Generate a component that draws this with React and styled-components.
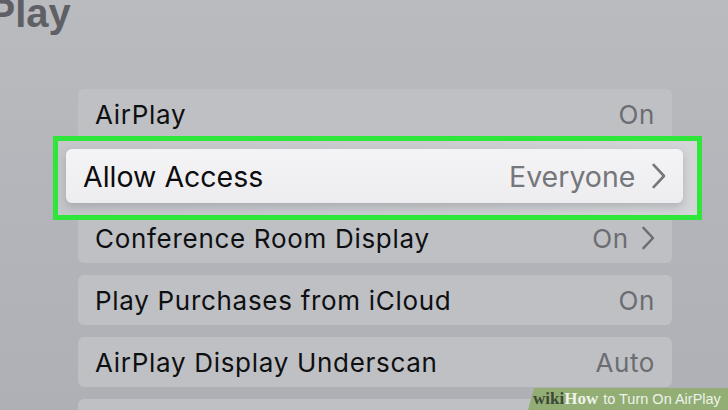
import React from "react";
import styled, { createGlobalStyle } from "styled-components";

const Global = createGlobalStyle`
  html, body { margin: 0; padding: 0; }
  body { width: 728px; height: 410px; overflow: hidden; }
`;

const Screen = styled.div`
  position: relative;
  width: 728px;
  height: 410px;
  overflow: hidden;
  background: linear-gradient(180deg, #b9bbbf 0%, #b3b5ba 50%, #aeb0b5 100%);
  font-family: Inter, "Liberation Sans", sans-serif;
`;

const Title = styled.h1`
  margin: -7px 0 56px -67px;
  height: 40px;
  font-family: "Liberation Sans", Arial, sans-serif;
  font-weight: 700;
  font-size: 40px;
  line-height: 40px;
  color: #5f6065;
  white-space: nowrap;
`;

const List = styled.div`
  display: flex;
  flex-direction: column;
  gap: 12px;
  margin-left: 78px;
  width: 594px;
`;

const Row = styled.div`
  display: flex;
  align-items: center;
  justify-content: space-between;
  height: 50px;
  flex-shrink: 0;
  padding: 0 17px;
  border-radius: 6px;
  background: #bec0c4;
`;

const Label = styled.span`
  font-size: 26px;
  letter-spacing: 0.7px;
  color: #0e0f11;
`;

const Value = styled.span`
  display: flex;
  align-items: center;
  gap: 12px;
  font-size: 26px;
  letter-spacing: 0.6px;
  color: #6c6d72;
`;

const Highlight = styled.div`
  margin: -15px -30px -19px -25px;
  border: 5px solid #2fe63b;
  padding: 8px 14px 12px 8px;
  background: linear-gradient(90deg, #c4c6ca 0%, #cbcdd0 60%, #d3d5d8 100%);
  position: relative;
  z-index: 1;
`;

const Card = styled.div`
  display: flex;
  align-items: center;
  justify-content: space-between;
  height: 54px;
  padding: 0 16px 0 17px;
  border-radius: 6px;
  background: linear-gradient(180deg, #f4f4f6 0%, #ededef 100%);
  box-shadow: 0 4px 8px rgba(80, 82, 88, 0.25);
`;

const CardLabel = styled.span`
  font-size: 28.5px;
  color: #0c0c0e;
`;

const CardValue = styled.span`
  display: flex;
  align-items: center;
  gap: 16px;
  font-size: 28.5px;
  color: #76777b;
`;

const Watermark = styled.div`
  position: absolute;
  right: 0;
  bottom: 0;
  width: 200px;
  height: 22px;
  display: flex;
  align-items: center;
  padding-left: 5px;
  box-sizing: border-box;
  background: #92ae75;
  clip-path: polygon(6px 0, 100% 0, 100% 100%, 0 100%);
  white-space: nowrap;
  z-index: 2;
`;

const Wiki = styled.span`
  font-family: "Liberation Serif", serif;
  font-weight: 700;
  font-size: 17px;
  color: ${(p) => (p.$light ? "#eef2e8" : "#3e4837")};
`;

const WTitle = styled.span`
  font-family: "Liberation Sans", Arial, sans-serif;
  font-size: 14.5px;
  color: #eef2ea;
  margin-left: 5px;
`;

const Chevron = ({ size = 24 }) => (
  <svg width={size * 0.6} height={size} viewBox="0 0 12 20" fill="none">
    <path d="M2 1.5 L10 10 L2 18.5" stroke="currentColor" strokeWidth="2" strokeLinecap="round" strokeLinejoin="round" />
  </svg>
);

export default function App() {
  return (
    <>
      <Global />
      <Screen>
        <Title>AirPlay</Title>
        <List>
          <Row>
            <Label>AirPlay</Label>
            <Value>On</Value>
          </Row>
          <Highlight>
            <Card>
              <CardLabel>Allow Access</CardLabel>
              <CardValue>
                Everyone
                <Chevron size={26} />
              </CardValue>
            </Card>
          </Highlight>
          <Row>
            <Label>Conference Room Display</Label>
            <Value>
              On
              <Chevron size={24} />
            </Value>
          </Row>
          <Row>
            <Label>Play Purchases from iCloud</Label>
            <Value>On</Value>
          </Row>
          <Row>
            <Label>AirPlay Display Underscan</Label>
            <Value>Auto</Value>
          </Row>
          <Row />
        </List>
        <Watermark>
          <Wiki>wiki</Wiki>
          <Wiki $light>How</Wiki>
          <WTitle>to Turn On AirPlay</WTitle>
        </Watermark>
      </Screen>
    </>
  );
}
